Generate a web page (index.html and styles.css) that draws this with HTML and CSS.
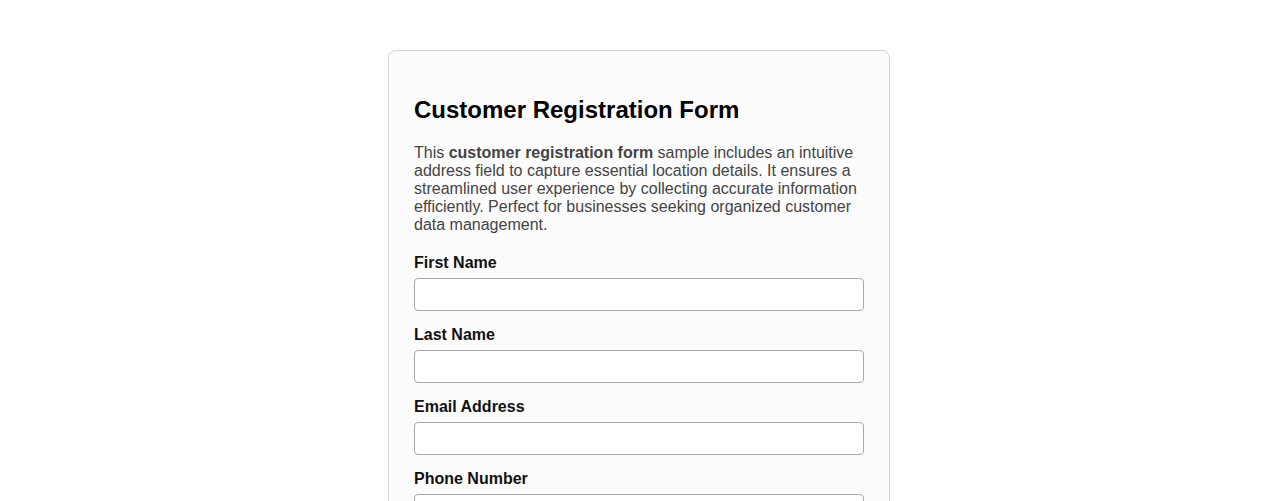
FILE: index.html
```html
<!DOCTYPE html>
<html lang="en">

<head>
  <meta charset="UTF-8">
  <meta name="viewport" content="width=device-width, initial-scale=1.0">
  <title>Customer Registration Form</title>
  <link rel="stylesheet" href="styles.css">
</head>

<body>

  <div class="form-container">
    <h2>Customer Registration Form</h2>
    <p class="intro">This <strong>customer registration form</strong> sample includes an intuitive address field to capture essential location details. It ensures a streamlined user experience by collecting accurate information efficiently. Perfect for businesses seeking organized customer data management.</p>

    <form>
      <div class="form-group">
        <label for="firstName">First Name</label>
        <input type="text" id="firstName" name="firstName">
      </div>
      <div class="form-group">
        <label for="lastName">Last Name</label>
        <input type="text" id="lastName" name="lastName">
      </div>
      <div class="form-group">
        <label for="email">Email Address</label>
        <input type="email" id="email" name="email">
      </div>
      <div class="form-group">
        <label for="phone">Phone Number</label>
        <input type="tel" id="phone" name="phone">
      </div>
      <div class="form-group">
        <label for="address">Address</label>
        <input type="text" id="address" name="address">
      </div>
    </form>
  </div>

</body>

</html>
```

FILE: styles.css
```css
body {
  font-family: "Liberation Sans", Arial, sans-serif;
  background-color: #fff;
  margin: 0;
  padding: 50px 0;
}

.form-container {
  width: 450px;
  margin: 0 auto;
  padding: 25px;
  background: #fcfcfc;
  border: 1px solid #d4d4d4;
  border-radius: 8px;
}

h2 {
  font-size: 24px;
  color: #000;
  margin: 20px 0;
}

.intro {
  font-size: 16px;
  line-height: 18px;
  color: #444;
  margin: 0 0 20px;
}

.form-group {
  margin-bottom: 15px;
}

label {
  display: block;
  font-weight: bold;
  font-size: 16px;
  line-height: 18px;
  color: #111;
  margin-bottom: 6px;
}

input {
  display: block;
  width: 100%;
  height: 33px;
  box-sizing: border-box;
  padding: 6px 8px;
  border: 1px solid #a9a9a9;
  border-radius: 4px;
  background: #fff;
  font-size: 14px;
  font-family: inherit;
}
```
